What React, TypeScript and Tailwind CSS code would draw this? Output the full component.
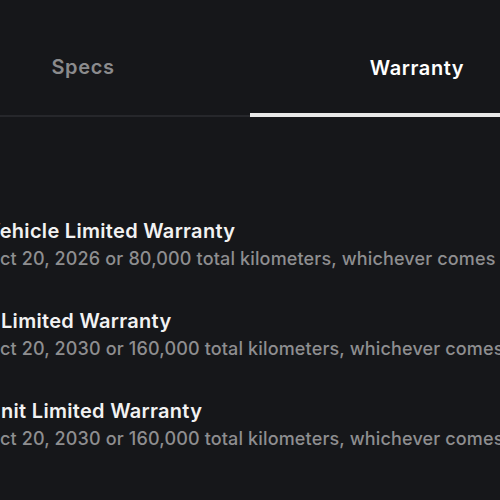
import React from "react";

type Warranty = {
  title: string;
  detail: string;
  indent?: boolean;
};

const warranties: Warranty[] = [
  {
    title: "Vehicle Limited Warranty",
    detail: "Oct 20, 2026 or 80,000 total kilometers, whichever comes first",
  },
  {
    title: "Limited Warranty",
    detail: "Oct 20, 2030 or 160,000 total kilometers, whichever comes first",
    indent: true,
  },
  {
    title: "Unit Limited Warranty",
    detail: "Oct 20, 2030 or 160,000 total kilometers, whichever comes first",
  },
];

const App: React.FC = () => {
  return (
    <div
      className="w-[500px] h-[500px] overflow-hidden bg-[#16171a] antialiased"
      style={{ fontFamily: "Inter, 'Noto Sans', sans-serif" }}
    >
      {/* tabs */}
      <div className="flex ml-[-84px] w-[668px]">
        <div className="w-[334px] h-[117px] flex items-center justify-center border-b-2 border-[#26272b]">
          <span className="text-[20px] tracking-[0.6px] font-semibold text-[#8b8b8d] pt-[18px]">Specs</span>
        </div>
        <div className="w-[334px] h-[117px] flex items-center justify-center border-b-4 border-[#e8e8e8]">
          <span className="text-[20px] tracking-[0.6px] font-semibold text-white pt-[22px]">Warranty</span>
        </div>
      </div>

      {/* list */}
      <div className="ml-[-14px] pt-[102px] flex flex-col gap-[39px]">
        {warranties.map((w, i) => (
          <div key={i} className="flex flex-col gap-[4px] whitespace-nowrap">
            <div
              className={`text-[20px] leading-[24px] tracking-[0.3px] font-semibold text-[#f2f2f2] ${
                w.indent ? "pl-[15px]" : ""
              }`}
            >
              {w.title}
            </div>
            <div className="text-[18px] leading-[23px] tracking-[0.15px] font-medium text-[#8e8e90]">
              {w.detail}
            </div>
          </div>
        ))}
      </div>
    </div>
  );
};

export default App;
